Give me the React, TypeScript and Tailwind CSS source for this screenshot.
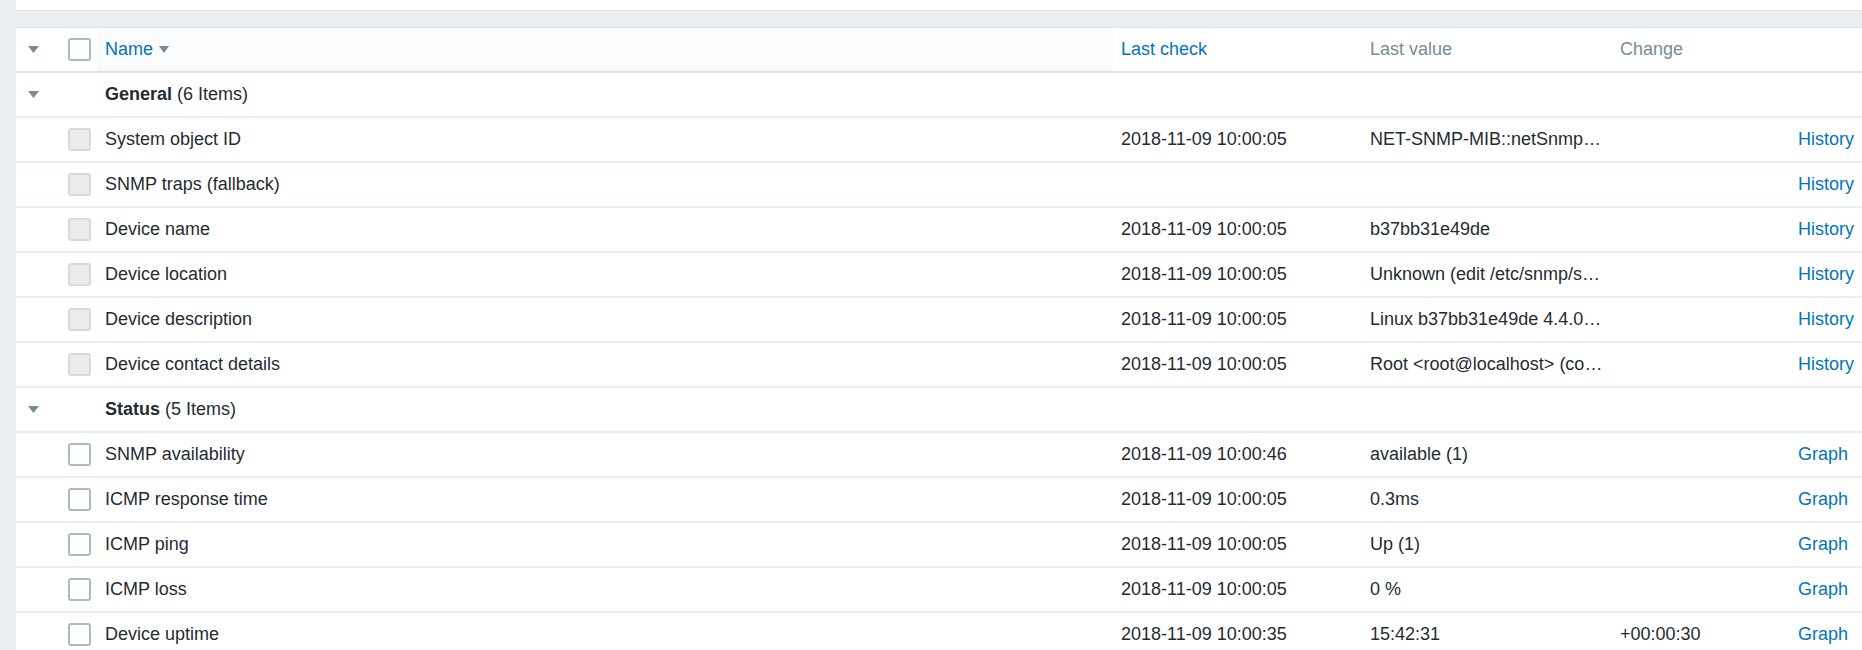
import React from "react";

type Item = {
  name: string;
  check?: string;
  value?: string;
  change?: string;
  link: string;
  disabled?: boolean;
};

const general: Item[] = [
  { name: "System object ID", check: "2018-11-09 10:00:05", value: "NET-SNMP-MIB::netSnmp…", link: "History", disabled: true },
  { name: "SNMP traps (fallback)", link: "History", disabled: true },
  { name: "Device name", check: "2018-11-09 10:00:05", value: "b37bb31e49de", link: "History", disabled: true },
  { name: "Device location", check: "2018-11-09 10:00:05", value: "Unknown (edit /etc/snmp/s…", link: "History", disabled: true },
  { name: "Device description", check: "2018-11-09 10:00:05", value: "Linux b37bb31e49de 4.4.0…", link: "History", disabled: true },
  { name: "Device contact details", check: "2018-11-09 10:00:05", value: "Root <root@localhost> (co…", link: "History", disabled: true },
];

const status: Item[] = [
  { name: "SNMP availability", check: "2018-11-09 10:00:46", value: "available (1)", link: "Graph" },
  { name: "ICMP response time", check: "2018-11-09 10:00:05", value: "0.3ms", link: "Graph" },
  { name: "ICMP ping", check: "2018-11-09 10:00:05", value: "Up (1)", link: "Graph" },
  { name: "ICMP loss", check: "2018-11-09 10:00:05", value: "0 %", link: "Graph" },
  { name: "Device uptime", check: "2018-11-09 10:00:35", value: "15:42:31", change: "+00:00:30", link: "Graph" },
];

function Tri({ w = 11, h = 7 }: { w?: number; h?: number }) {
  return (
    <svg width={w} height={h} viewBox={`0 0 ${w} ${h}`} className="block">
      <polygon points={`0,0 ${w},0 ${w / 2},${h}`} fill="#768d99" />
    </svg>
  );
}

function Box({ disabled }: { disabled?: boolean }) {
  return (
    <div
      className={
        disabled
          ? "w-[23px] h-[23px] rounded-[3px] border-2 border-[#d3dbdf] bg-[#ebebeb]"
          : "w-[23px] h-[23px] rounded-[3px] border-2 border-[#acbbc2] bg-white"
      }
    />
  );
}

function Row({ item }: { item: Item }) {
  return (
    <div className="flex h-[45px] items-center border-b-2 border-[#ebeef0] bg-white">
      <div className="w-[52px] shrink-0" />
      <div className="w-[29px] shrink-0 flex items-center">
        <Box disabled={item.disabled} />
      </div>
      <div className="w-[1016px] shrink-0 pl-[8px] whitespace-nowrap">{item.name}</div>
      <div className="w-[249px] shrink-0 pl-[8px] whitespace-nowrap">{item.check ?? ""}</div>
      <div className="w-[250px] shrink-0 pl-[8px] whitespace-nowrap">{item.value ?? ""}</div>
      <div className="w-[178px] shrink-0 pl-[8px] whitespace-nowrap">{item.change ?? ""}</div>
      <div className="flex-1 pl-[8px] whitespace-nowrap text-[#0275b8]">{item.link}</div>
    </div>
  );
}

function Group({ title, count }: { title: string; count: number }) {
  return (
    <div className="flex h-[45px] items-center border-b-2 border-[#ebeef0] bg-white">
      <div className="w-[52px] shrink-0 pl-[12px]">
        <Tri />
      </div>
      <div className="w-[29px] shrink-0" />
      <div className="pl-[8px] whitespace-nowrap">
        <span className="font-bold">{title}</span> ({count} Items)
      </div>
    </div>
  );
}

export default function App() {
  return (
    <div
      className="w-[1862px] h-[650px] overflow-hidden bg-[#ebeef0] pl-[16px] text-[18px] text-[#1f2c33]"
      style={{ fontFamily: '"Liberation Sans", Arial, sans-serif' }}
    >
      <div className="h-[11px] bg-white border-b border-[#dde3e8]" />
      <div className="mt-[16px] border-t border-[#dde3e8] bg-white">
        <div className="flex h-[45px] items-center border-b-2 border-[#dde3e8] bg-white">
          <div className="w-[52px] shrink-0 pl-[12px]">
            <Tri />
          </div>
          <div className="w-[29px] shrink-0 flex items-center">
            <Box />
          </div>
          <div className="w-[1016px] shrink-0 self-stretch flex items-center pl-[8px] bg-[#f9fbfd]">
            <span className="text-[#0275b8]">Name</span>
            <span className="ml-[6px]">
              <Tri w={10} h={7} />
            </span>
          </div>
          <div className="w-[249px] shrink-0 pl-[8px] text-[#0275b8]">Last check</div>
          <div className="w-[250px] shrink-0 pl-[8px] text-[#768d99]">Last value</div>
          <div className="w-[178px] shrink-0 pl-[8px] text-[#768d99]">Change</div>
          <div className="flex-1" />
        </div>
        <Group title="General" count={6} />
        {general.map((it) => (
          <Row key={it.name} item={it} />
        ))}
        <Group title="Status" count={5} />
        {status.map((it) => (
          <Row key={it.name} item={it} />
        ))}
      </div>
    </div>
  );
}
